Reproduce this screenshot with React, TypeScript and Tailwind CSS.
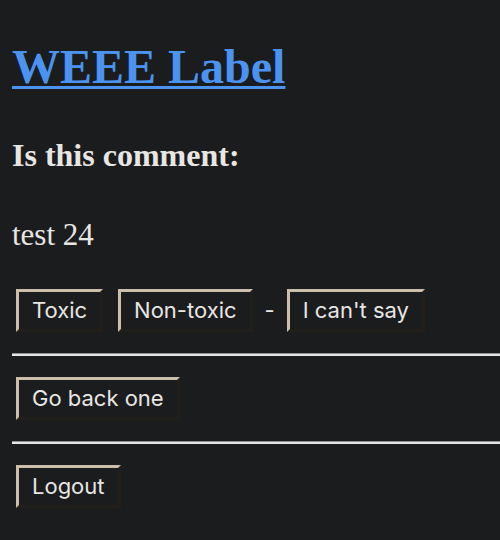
const serif = { fontFamily: '"Liberation Serif", "Times New Roman", serif' };

function OutsetButton({ label }: { label: string }) {
  return (
    <button className="h-[43px] border-[3px] border-solid border-t-[#cbbfac] border-l-[#cbbfac] border-b-[#221e19] border-r-[#221e19] bg-[#1b1c1e] px-[13px] text-[22px] leading-[25px] text-[#e8e6e3] font-['Inter',sans-serif]">
      {label}
    </button>
  );
}

function Rule() {
  return (
    <div className="-mr-[12px] h-[3px] border-t border-t-[#8f8f8f] border-b-2 border-b-[#e6e6e6]" />
  );
}

export default function App() {
  return (
    <div className="min-h-screen w-[500px] overflow-hidden bg-[#1b1c1e] px-[12px] pt-[39px] text-[#e8e6e3]">
      <h1 className="text-[48px] font-bold leading-[55px]" style={serif}>
        <a href="#" className="text-[#4a93f0] underline decoration-[3px] underline-offset-[3px]">
          WEEE Label
        </a>
      </h1>

      <h2 className="mt-[43px] text-[32px] font-bold leading-[37px]" style={serif}>
        Is this comment:
      </h2>

      <p className="mt-[43px] text-[31px] leading-[36px]" style={serif}>
        test 24
      </p>

      <div className="mt-[36px] flex items-center pl-[4px]">
        <OutsetButton label="Toxic" />
        <div className="w-[15px]" />
        <OutsetButton label="Non-toxic" />
        <span className="mx-[12px] text-[22px] font-['Inter',sans-serif]">-</span>
        <OutsetButton label="I can't say" />
      </div>

      <div className="mt-[21px]">
        <Rule />
      </div>

      <div className="mt-[21px] pl-[4px]">
        <OutsetButton label="Go back one" />
      </div>

      <div className="mt-[21px]">
        <Rule />
      </div>

      <div className="mt-[21px] pl-[4px]">
        <OutsetButton label="Logout" />
      </div>
    </div>
  );
}
